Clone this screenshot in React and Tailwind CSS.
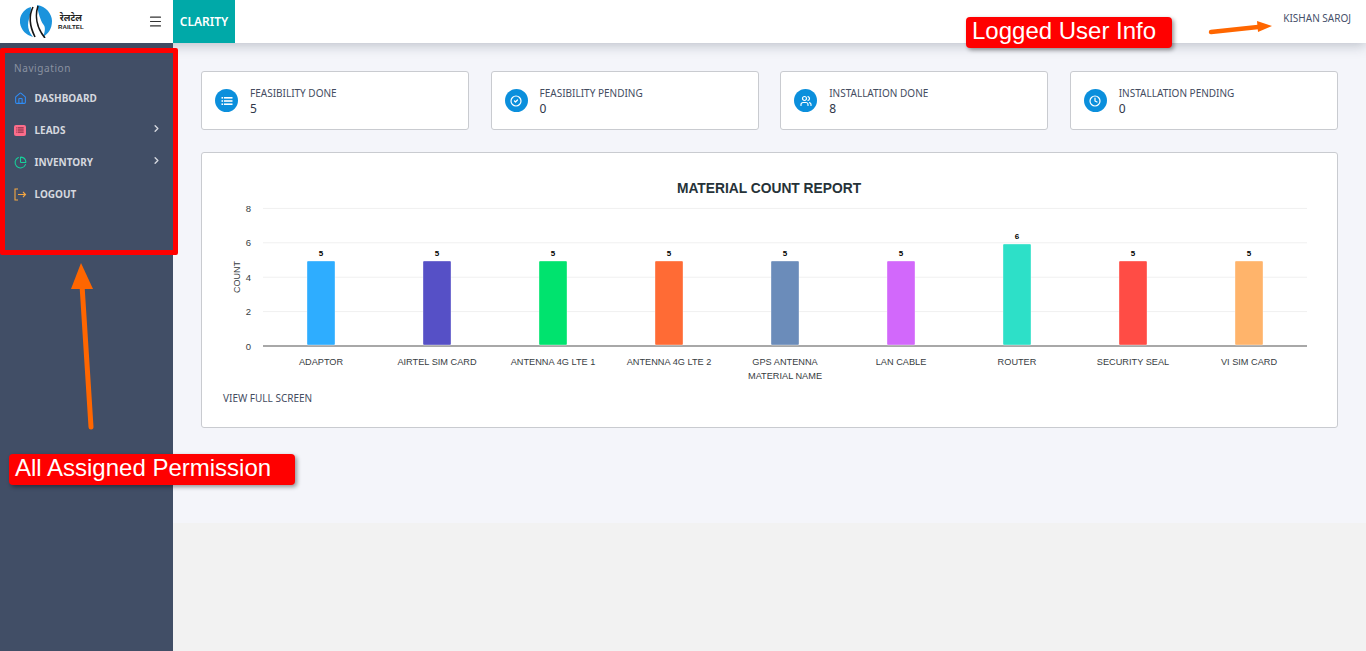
import { ChevronRight, House, CircleCheck, Users, Clock, ChartPie, Menu } from 'lucide-react'

function ListIcon({ className }) {
  return (
    <svg className={className} viewBox="0 0 12 12" fill="currentColor">
      <rect x="0.5" y="2" width="1.6" height="1.6" />
      <rect x="3" y="2" width="8.5" height="1.6" />
      <rect x="0.5" y="5.2" width="1.6" height="1.6" />
      <rect x="3" y="5.2" width="8.5" height="1.6" />
      <rect x="0.5" y="8.4" width="1.6" height="1.6" />
      <rect x="3" y="8.4" width="8.5" height="1.6" />
    </svg>
  )
}

const stats = [
  { label: 'FEASIBILITY DONE', value: '5', icon: ListIcon },
  { label: 'FEASIBILITY PENDING', value: '0', icon: CircleCheck },
  { label: 'INSTALLATION DONE', value: '8', icon: Users },
  { label: 'INSTALLATION PENDING', value: '0', icon: Clock },
]

const bars = [
  { name: 'ADAPTOR', value: 5, color: '#2eadff' },
  { name: 'AIRTEL SIM CARD', value: 5, color: '#5650c6' },
  { name: 'ANTENNA 4G LTE 1', value: 5, color: '#00e36e' },
  { name: 'ANTENNA 4G LTE 2', value: 5, color: '#ff6b35' },
  { name: 'GPS ANTENNA', value: 5, color: '#6b8cba' },
  { name: 'LAN CABLE', value: 5, color: '#d268fb' },
  { name: 'ROUTER', value: 6, color: '#2de0c8' },
  { name: 'SECURITY SEAL', value: 5, color: '#ff4c45' },
  { name: 'VI SIM CARD', value: 5, color: '#ffb46b' },
]

function Logo() {
  return (
    <div className="flex items-center gap-[6px]">
      <svg width="32" height="33" viewBox="0 0 32 33">
        <path d="M11 2 C3 4 -1 12 0 18 C1 25 6 30 13 32 C8 26 7 20 9 14 C10 10 11 6 11 2Z" fill="#1b93dc" />
        <path d="M17 0 C26 1 32 9 32 16 C32 24 28 29 23 32 C25 27 26 22 23 19 C21 16 18 8 17 0Z" fill="#1b93dc" />
        <path d="M13 2 C9 10 9 20 15 32" fill="none" stroke="#151515" strokeWidth="1.6" />
        <path d="M18 1 C15 10 16 22 25 33" fill="none" stroke="#151515" strokeWidth="1.6" />
      </svg>
      <div className="flex flex-col items-center leading-none text-[#222]">
        <span className="text-[9px] font-bold font-['Noto_Sans_CJK_SC','Noto_Sans',sans-serif] leading-[10px]">रेलटेल</span>
        <span className="text-[6.2px] font-bold font-['Liberation_Sans',sans-serif] leading-[8px]">RAILTEL</span>
      </div>
    </div>
  )
}

function NavItem({ icon, label, arrow }) {
  return (
    <div className="flex items-center h-[32px] pl-[14px] pr-[11px]">
      <span className="w-[20.5px] flex items-center">{icon}</span>
      <span className="text-[10px] font-bold text-[#d5d8df] flex-1">{label}</span>
      {arrow && <ChevronRight className="w-[11px] h-[11px] text-[#d5d8df] -mt-[4px]" strokeWidth={3} />}
    </div>
  )
}

function StatCard({ label, value, icon: Icon }) {
  return (
    <div className="h-[59px] bg-white border border-[#c9cbd0] rounded-[3px] flex items-center pl-[13px]">
      <div className="w-[23px] h-[23px] rounded-full bg-[#0b8fdc] flex items-center justify-center">
        <Icon className="w-[12px] h-[12px] text-white" strokeWidth={2.4} />
      </div>
      <div className="ml-[12px] mt-[1px]">
        <div className="text-[10px] leading-[14px] text-[#444c5f]">{label}</div>
        <div className="text-[12px] leading-[17px] text-[#2f3749]">{value}</div>
      </div>
    </div>
  )
}

function Chart() {
  const y = v => 346 - v * 17.2
  const barTop = v => 346 - v * 17
  return (
    <svg width="1135" height="230" viewBox="202 170 1135 230" className="block font-['Liberation_Sans',sans-serif]">
      <text x="769" y="193" textAnchor="middle" fontSize="13.8" fontWeight="700" fill="#263238">MATERIAL COUNT REPORT</text>
      {[8, 6, 4, 2, 0].map(v => (
        <g key={v}>
          <line x1="263" x2="1307" y1={y(v)} y2={y(v)} stroke={v === 0 ? '#a8a8a8' : '#f0f0f0'} strokeWidth={v === 0 ? 2 : 1} />
          <text x="251" y={y(v) + 3.5} textAnchor="end" fontSize="9.5" fill="#373d3f">{v}</text>
        </g>
      ))}
      <text transform="translate(240 277) rotate(-90)" textAnchor="middle" fontSize="9" fill="#373d3f">COUNT</text>
      {bars.map((b, i) => {
        const cx = 321 + i * 116
        return (
          <g key={b.name}>
            <rect x={cx - 14} y={barTop(b.value)} width="28" height={345 - barTop(b.value)} fill={b.color} stroke="#fff" strokeOpacity="0.6" strokeWidth="0.6" rx="1" />
            <text x={cx} y={barTop(b.value) - 5} textAnchor="middle" fontSize="8" fontWeight="700" fill="#000">{b.value}</text>
            <text x={cx} y="365" textAnchor="middle" fontSize="9.2" fill="#373d3f">{b.name}</text>
          </g>
        )
      })}
      <text x="785" y="379" textAnchor="middle" fontSize="9.2" fill="#373d3f">MATERIAL NAME</text>
    </svg>
  )
}

export default function App() {
  return (
    <div className="relative w-[1366px] h-[651px] overflow-hidden bg-[#f2f2f2] font-['Noto_Sans',sans-serif]">
      {/* Шапка */}
      <header className="relative z-10 h-[43px] bg-white flex shadow-[0_2px_12px_rgba(60,70,90,0.32)]">
        <div className="w-[173px] flex items-center pl-[20px] relative">
          <Logo />
          <Menu className="w-[15px] h-[15px] text-[#333] absolute left-[148px]" strokeWidth={1.8} />
        </div>
        <div className="w-[62px] bg-[#00a9a8] flex items-center justify-center text-white text-[12px] font-semibold">CLARITY</div>
        <div className="flex-1 flex justify-end pr-[15px] pt-[11px]">
          <span className="text-[10px] leading-[14px] text-[#46506a]">KISHAN SAROJ</span>
        </div>
      </header>

      <div className="flex h-[608px]">
        {/* Боковое меню */}
        <aside className="w-[173px] bg-[#414e66] pt-[18px]">
          <div className="text-[10px] leading-[14px] tracking-[0.6px] text-[#8a92a1] pl-[14px] mb-[7px]">Navigation</div>
          <NavItem label="DASHBOARD" icon={<House className="w-[13px] h-[13px] text-[#2f8cf5]" strokeWidth={2} />} />
          <NavItem label="LEADS" arrow icon={<span className="w-[12px] h-[11px] bg-[#fb6d8b] rounded-[2px] flex items-center justify-center"><ListIcon className="w-[8px] h-[8px] text-[#7a2a40]" /></span>} />
          <NavItem label="INVENTORY" arrow icon={<ChartPie className="w-[13px] h-[13px] text-[#17d09a]" strokeWidth={2} />} />
          <NavItem label="LOGOUT" icon={
            <svg className="w-[13px] h-[13px] text-[#f5a742]" viewBox="0 0 13 13" fill="none" stroke="currentColor" strokeWidth="1.1">
              <path d="M4 1 H1 V12 H4" />
              <path d="M4 6.5 H11.5 M9 4 L11.5 6.5 L9 9" />
            </svg>
          } />
        </aside>

        <main className="flex-1 flex flex-col">
          <div className="h-[480px] bg-[#f4f5fa] px-[28px] pt-[28px]">
            <div className="grid grid-cols-4 gap-[21.33px]">
              {stats.map(s => <StatCard key={s.label} {...s} />)}
            </div>
            <div className="mt-[22px] h-[276px] bg-white border border-[#c9cbd0] rounded-[3px] pt-[17px]">
              <Chart />
              <div className="pl-[21px] -mt-[8px] text-[10px] leading-[13px] text-[#444c5f]">VIEW FULL SCREEN</div>
            </div>
          </div>
        </main>
      </div>

      {/* Пометки поверх скриншота */}
      <div className="absolute left-0 top-[48px] w-[178px] h-[207px] border-[5px] border-[#ff0000] rounded-[2px] z-20" />
      <div className="absolute left-[966px] top-[17px] w-[206px] h-[31px] bg-[#ff0000] rounded-[4px] z-20 text-white text-[24px] leading-[28px] pl-[6px] font-['Liberation_Sans',sans-serif] shadow-[2px_2px_4px_rgba(0,0,0,0.4)]">Logged User Info</div>
      <div className="absolute left-[9px] top-[454px] w-[286px] h-[31px] bg-[#ff0000] rounded-[4px] z-20 text-white text-[24px] leading-[28px] pl-[6px] font-['Liberation_Sans',sans-serif] shadow-[2px_2px_4px_rgba(0,0,0,0.4)]">All Assigned Permission</div>
      <svg className="absolute left-0 top-0 z-20 pointer-events-none" width="1366" height="651">
        <path d="M1211 32 L1258 27" stroke="#ff6600" strokeWidth="4.5" strokeLinecap="round" />
        <path d="M1257 21 L1272 26 L1258 32 Z" fill="#ff6600" />
        <path d="M91 427 L82 285" stroke="#ff6600" strokeWidth="5" strokeLinecap="round" />
        <path d="M81 263 L93 289 L71 289 Z" fill="#ff6600" />
      </svg>
    </div>
  )
}
